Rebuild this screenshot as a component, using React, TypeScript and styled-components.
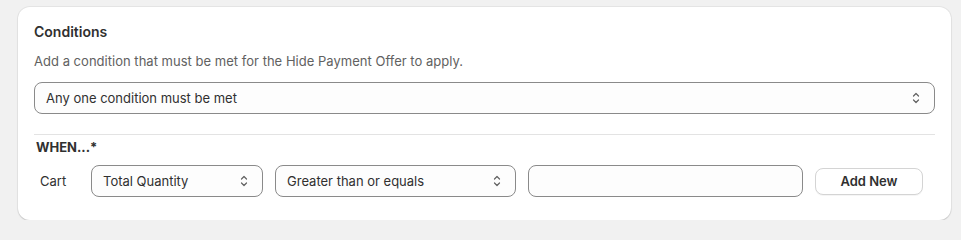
import React from "react";
import styled, { createGlobalStyle } from "styled-components";

const Global = createGlobalStyle`
  html, body { margin: 0; padding: 0; background: #f1f1f1; }
  body { font-family: Inter, "Noto Sans", sans-serif; color: #303030; -webkit-font-smoothing: antialiased; }
`;

const Card = styled.section`
  margin: 7px 10px 0 18px;
  background: #ffffff;
  border-radius: 12px;
  box-shadow: 0 1px 0 rgba(26, 26, 26, 0.07), 0 0 0 1px rgba(26, 26, 26, 0.05), 0 1px 2px rgba(26,26,26,0.08);
  padding: 15px 16px 23px 16px;
  display: flex;
  flex-direction: column;
`;

const Title = styled.h2`
  margin: 0;
  font-size: 14px;
  line-height: 20px;
  font-weight: 620;
  color: #303030;
`;

const Description = styled.p`
  margin: 9px 0 0;
  font-size: 13px;
  line-height: 20px;
  letter-spacing: 0.02px;
  color: #616161;
`;

const MatchField = styled.div`
  margin-top: 11px;
`;

const SelectBox = styled.div`
  position: relative;
  box-sizing: border-box;
  height: 32px;
  border: 1px solid #8a8a8a;
  border-radius: 8px;
  background: #fdfdfd;
  display: flex;
  align-items: center;
  padding: 0 32px 0 11px;
  font-size: 13px;
  color: #303030;
`;

const IconWrap = styled.span`
  position: absolute;
  right: 13px;
  top: 50%;
  transform: translateY(-50%);
  display: flex;
  color: #616161;
`;

const Divider = styled.hr`
  margin: 20px 0 0;
  border: 0;
  border-top: 1px solid #e3e3e3;
  height: 0;
`;

const When = styled.div`
  margin-top: 2px;
  font-size: 13px;
  line-height: 20px;
  font-weight: 700;
  color: #303030;
  padding-left: 2px;
`;

const Row = styled.div`
  margin-top: 8px;
  display: grid;
  grid-template-columns: 45px 172px 241px 1fr 108px;
  column-gap: 12px;
  align-items: center;
  padding-right: 12px;
`;

const Label = styled.span`
  font-size: 13px;
  color: #303030;
  padding-left: 6px;
`;

const TextField = styled.input`
  box-sizing: border-box;
  height: 32px;
  width: 100%;
  border: 1px solid #8a8a8a;
  border-radius: 8px;
  background: #fdfdfd;
  font: inherit;
  outline: none;
`;

const Button = styled.button`
  box-sizing: border-box;
  height: 27px;
  width: 100%;
  border: 1px solid #d4d4d4;
  border-radius: 8px;
  background: #ffffff;
  box-shadow: 0 1px 0 rgba(0, 0, 0, 0.04);
  font-family: inherit;
  font-size: 13px;
  font-weight: 560;
  color: #303030;
  cursor: pointer;
`;

const Chevrons = () => (
  <svg width="10" height="14" viewBox="0 0 10 14" fill="none">
    <path d="M2.5 5 L5 2.5 L7.5 5" stroke="currentColor" strokeWidth="1.2" strokeLinecap="round" strokeLinejoin="round" />
    <path d="M2.5 9 L5 11.5 L7.5 9" stroke="currentColor" strokeWidth="1.2" strokeLinecap="round" strokeLinejoin="round" />
  </svg>
);

const Select = ({ children }: { children: React.ReactNode }) => (
  <SelectBox>
    {children}
    <IconWrap>
      <Chevrons />
    </IconWrap>
  </SelectBox>
);

export default function App() {
  return (
    <>
      <Global />
      <Card>
        <Title>Conditions</Title>
        <Description>Add a condition that must be met for the Hide Payment Offer to apply.</Description>
        <MatchField>
          <Select>Any one condition must be met</Select>
        </MatchField>
        <Divider />
        <When>WHEN...*</When>
        <Row>
          <Label>Cart</Label>
          <Select>Total Quantity</Select>
          <Select>Greater than or equals</Select>
          <TextField />
          <Button>Add New</Button>
        </Row>
      </Card>
    </>
  );
}
